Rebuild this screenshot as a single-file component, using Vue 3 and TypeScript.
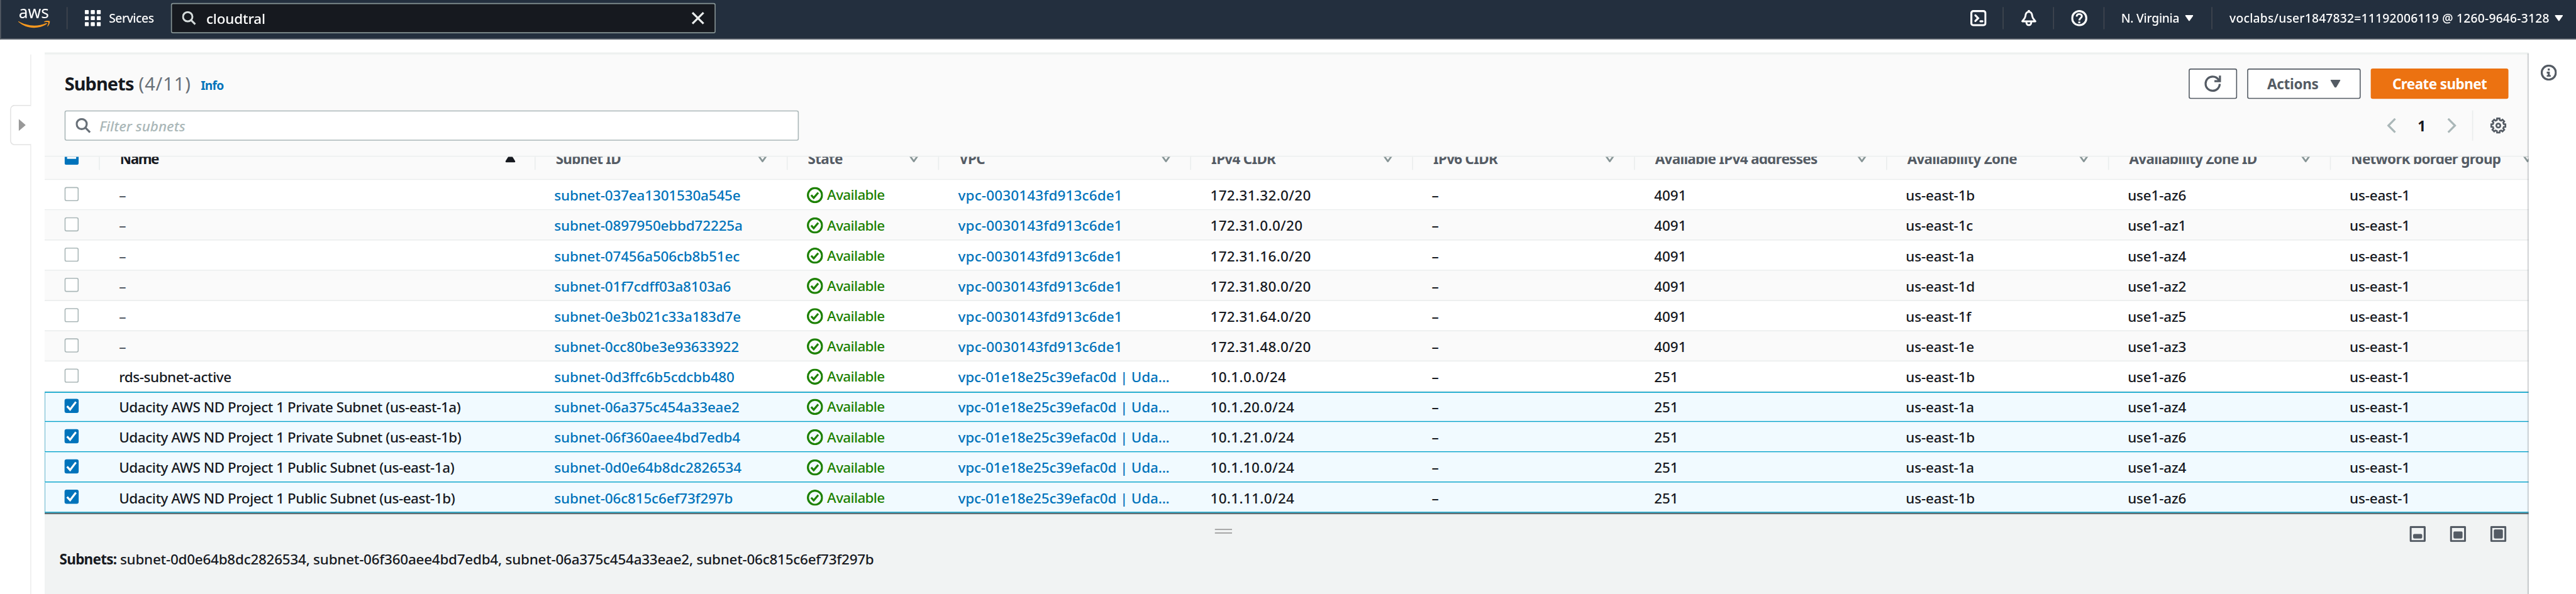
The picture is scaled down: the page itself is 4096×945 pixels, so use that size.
<script setup lang="ts">
interface Column {
  key: string
  label: string
  width: number
}

interface Subnet {
  name: string
  id: string
  vpc: string
  ipv4: string
  free: number
  zone: string
  zoneId: string
  selected: boolean
}

const columns: Column[] = [
  { key: 'name', label: 'Name', width: 864 },
  { key: 'id', label: 'Subnet ID', width: 500 },
  { key: 'state', label: 'State', width: 300 },
  { key: 'vpc', label: 'VPC', width: 500 },
  { key: 'ipv4', label: 'IPv4 CIDR', width: 440 },
  { key: 'ipv6', label: 'IPv6 CIDR', width: 440 },
  { key: 'free', label: 'Available IPv4 addresses', width: 500 },
  { key: 'zone', label: 'Availability Zone', width: 440 },
  { key: 'zoneId', label: 'Availability Zone ID', width: 440 },
  { key: 'border', label: 'Network border group', width: 440 },
]

const defaultVpc = 'vpc-0030143fd913c6de1'
const projectVpc = 'vpc-01e18e25c39efac0d | Uda...'
const project = 'Udacity AWS ND Project 1'

function row(name: string, id: string, vpc: string, ipv4: string, free: number, zone: string, az: number, selected = false): Subnet {
  return { name, id: 'subnet-' + id, vpc, ipv4, free, zone: 'us-east-1' + zone, zoneId: 'use1-az' + az, selected }
}

const subnets: Subnet[] = [
  row('–', '037ea1301530a545e', defaultVpc, '172.31.32.0/20', 4091, 'b', 6),
  row('–', '0897950ebbd72225a', defaultVpc, '172.31.0.0/20', 4091, 'c', 1),
  row('–', '07456a506cb8b51ec', defaultVpc, '172.31.16.0/20', 4091, 'a', 4),
  row('–', '01f7cdff03a8103a6', defaultVpc, '172.31.80.0/20', 4091, 'd', 2),
  row('–', '0e3b021c33a183d7e', defaultVpc, '172.31.64.0/20', 4091, 'f', 5),
  row('–', '0cc80be3e93633922', defaultVpc, '172.31.48.0/20', 4091, 'e', 3),
  row('rds-subnet-active', '0d3ffc6b5cdcbb480', projectVpc, '10.1.0.0/24', 251, 'b', 6),
  row(project + ' Private Subnet (us-east-1a)', '06a375c454a33eae2', projectVpc, '10.1.20.0/24', 251, 'a', 4, true),
  row(project + ' Private Subnet (us-east-1b)', '06f360aee4bd7edb4', projectVpc, '10.1.21.0/24', 251, 'b', 6, true),
  row(project + ' Public Subnet (us-east-1a)', '0d0e64b8dc2826534', projectVpc, '10.1.10.0/24', 251, 'a', 4, true),
  row(project + ' Public Subnet (us-east-1b)', '06c815c6ef73f297b', projectVpc, '10.1.11.0/24', 251, 'b', 6, true),
]

const chosen = 'subnet-0d0e64b8dc2826534, subnet-06f360aee4bd7edb4, subnet-06a375c454a33eae2, subnet-06c815c6ef73f297b'

const template = '110px ' + columns.map((c) => c.width + 'px').join(' ')

// Cog outline: eight teeth alternating between two radii.
const cog = Array.from({ length: 8 }, (_, i) => {
  const at = (deg: number, r: number) => {
    const a = ((i * 45 + deg) * Math.PI) / 180
    return (16 + r * Math.sin(a)).toFixed(2) + ',' + (16 - r * Math.cos(a)).toFixed(2)
  }
  return [at(-10, 14.3), at(10, 14.3), at(15, 11.2), at(30, 11.2)].join(' ')
}).join(' ')

// Top edge of the filled block in each split-panel size icon.
const panelSizes = [16, 11, 7]
</script>

<template>
  <div class="viewport">
    <div class="console">
      <header class="topbar">
        <svg class="logo" viewBox="0 0 64 42" width="64" height="42">
          <text x="1" y="22" textLength="60" lengthAdjust="spacingAndGlyphs">aws</text>
          <g transform="translate(0 27) scale(0.2086) translate(-1 -113)" fill="#f7981f">
            <path d="M273.5,143.7c-32.9,24.3-80.7,37.2-121.8,37.2c-57.6,0-109.5-21.3-148.7-56.7c-3.1-2.8-0.3-6.6,3.4-4.4c42.4,24.6,94.7,39.5,148.8,39.5c36.5,0,76.6-7.6,113.5-23.2C274.2,133.6,278.9,139.7,273.5,143.7z" />
            <path d="M287.2,128.1c-4.2-5.4-27.8-2.6-38.5-1.3c-3.2,0.4-3.7-2.4-0.8-4.5c18.8-13.2,49.7-9.4,53.3-5c3.6,4.5-1,35.4-18.6,50.2c-2.7,2.3-5.3,1.1-4.1-1.9C282.5,155.7,291.4,133.4,287.2,128.1z" />
          </g>
        </svg>
        <i class="rule rule-logo"></i>
        <svg class="grid-icon" viewBox="0 0 32 32" width="32" height="32" fill="#fff">
          <template v-for="r in 3" :key="r">
            <rect v-for="c in 3" :key="c" :x="(c - 1) * 12" :y="(r - 1) * 12" width="8" height="8" rx="1.5" />
          </template>
        </svg>
        <span class="services">Services</span>
        <div class="search">
          <svg viewBox="0 0 30 30" width="28" height="28" fill="none" stroke="#d5dbdb" stroke-width="4">
            <circle cx="12" cy="12" r="10" /><path d="M19 19l9 9" />
          </svg>
          <span>cloudtral</span>
          <svg class="clear" viewBox="0 0 26 26" width="26" height="26" stroke="#eaeded" stroke-width="4">
            <path d="M2 2l22 22M24 2L2 24" />
          </svg>
        </div>
        <div class="tools">
          <svg viewBox="0 0 32 32" width="32" height="32" fill="none" stroke="#fff" stroke-width="4">
            <rect x="2" y="2" width="28" height="28" rx="4" />
            <path d="M10 10.5l5.5 5.5-5.5 5.5M20 22.2h4" stroke-linecap="round" />
          </svg>
          <i class="rule"></i>
          <svg viewBox="0 0 32 32" width="32" height="32" fill="none" stroke="#fff" stroke-width="4">
            <path d="M16 0v3" stroke-linecap="round" />
            <path d="M16 3.500C10.500 3.500 9.600 8 9.300 11.500 8.900 16 6 18 3 22.300H29C26 18 23.100 16 22.700 11.500 22.400 8 21.500 3.500 16 3.500Z" stroke-width="3.600" stroke-linejoin="round" />
            <path d="M11.300 23v2.200a4.700 4.700 0 0 0 9.400 0V23" stroke-width="3.600" />
          </svg>
          <i class="rule"></i>
          <svg viewBox="0 0 32 32" width="32" height="32" fill="none" stroke="#fff">
            <circle cx="16" cy="16" r="14" stroke-width="4" />
            <path d="M10.800 12.800c.2-3.600 2.400-4.900 5.200-4.900s5.200 1.600 5.200 4.300c0 3.400-5.100 3.600-5.100 8.300" stroke-width="3.600" />
            <path d="M16 22.800v3.200" stroke-width="4" />
          </svg>
          <i class="rule"></i>
          <span class="region">N. Virginia</span>
          <svg class="caret" viewBox="0 0 16 12" width="16" height="12"><path d="M1 0h14q1.500 0 .7 1.500L9 11q-1 1.300-2 0L.3 1.500Q-.5 0 1 0z" fill="#fff" /></svg>
          <i class="rule rule-region"></i>
          <span class="account">voclabs/user1847832=11192006119 @ 1260-9646-3128</span>
          <svg class="caret" viewBox="0 0 16 12" width="16" height="12"><path d="M1 0h14q1.500 0 .7 1.500L9 11q-1 1.300-2 0L.3 1.500Q-.5 0 1 0z" fill="#fff" /></svg>
        </div>
      </header>

      <div class="body">
        <aside class="nav">
          <div class="nav-line nav-top"></div>
          <div class="nav-tab">
            <svg viewBox="0 0 14 24" width="14" height="24"><path d="M0 0l14 12L0 24z" fill="#999" /></svg>
          </div>
          <div class="nav-line nav-rest"></div>
        </aside>

        <main class="panel">
          <section class="toolbar">
            <div class="heading">
              <h1>Subnets</h1>
              <span class="count">(4/11)</span>
              <a class="info">Info</a>
              <div class="buttons">
                <button class="btn refresh">
                  <svg viewBox="0 0 34 34" width="34" height="34" fill="none" stroke="#545b64" stroke-width="4">
                    <path d="M30.500 17.500C30.500 25 24.500 31 16.500 31S2.500 25 2.500 17 8.500 3 16.500 3C22 3 27 6.500 29.500 11" />
                    <path d="M31 1v11H20" />
                  </svg>
                </button>
                <button class="btn actions">
                  <span>Actions</span>
                  <svg viewBox="0 0 20 16" width="20" height="16"><path d="M1.500 0h17q2 0 1 2l-7.500 12.500q-2 2.500-4 0L.5 2q-1-2 1-2z" fill="#545b64" /></svg>
                </button>
                <button class="btn create">Create subnet</button>
              </div>
            </div>
            <div class="filter-row">
              <div class="filter">
                <svg viewBox="0 0 30 30" width="30" height="30" fill="none" stroke="#687078" stroke-width="4">
                  <circle cx="12" cy="12" r="10" /><path d="M19 19l9.500 9.500" />
                </svg>
                <span>Filter subnets</span>
              </div>
              <div class="pager">
                <svg viewBox="0 0 18 30" width="18" height="30" fill="none" stroke="#aab7b8" stroke-width="4"><path d="M16.500 1.500L3 15l13.500 13.500" /></svg>
                <b>1</b>
                <svg viewBox="0 0 18 30" width="18" height="30" fill="none" stroke="#aab7b8" stroke-width="4"><path d="M1.500 1.500L15 15 1.500 28.500" /></svg>
                <i></i>
                <svg viewBox="0 0 32 32" width="32" height="32" fill="none" stroke="#545b64" stroke-width="3.400">
                  <polygon :points="cog" /><circle cx="16" cy="16" r="4" />
                </svg>
              </div>
            </div>
          </section>

          <div class="thead">
            <div class="thead-row" :style="{ gridTemplateColumns: template }">
              <div class="th th-check"><span class="box mixed"></span></div>
              <div v-for="c in columns" :key="c.key" class="th" :class="{ sorted: c.key === 'name' }">
                <span>{{ c.label }}</span>
                <svg v-if="c.key === 'name'" viewBox="0 0 20 20" width="20" height="20"><path d="M10 1l9.500 15.500q1 2.500-1.500 2.500H2q-2.500 0-1.500-2.500z" fill="#16191f" /></svg>
                <svg v-else viewBox="0 0 20 20" width="20" height="20" fill="none" stroke="#879596" stroke-width="3.500" stroke-linejoin="round"><path d="M2.500 6.500h15L10 17z" /></svg>
              </div>
            </div>
          </div>

          <div v-for="s in subnets" :key="s.id" class="row" :class="{ selected: s.selected }" :style="{ gridTemplateColumns: template }">
            <div class="td td-check">
              <span class="box" :class="{ checked: s.selected }">
                <svg v-if="s.selected" viewBox="0 0 28 28" width="28" height="28" fill="none" stroke="#fff" stroke-width="4"><path d="M5 14.500l6 6.500L22.500 6" /></svg>
              </span>
            </div>
            <div class="td name" :class="{ blank: s.name === '–' }">{{ s.name }}</div>
            <div class="td link">{{ s.id }}</div>
            <div class="td state">
              <svg viewBox="0 0 32 32" width="32" height="32" fill="none" stroke="#1d8102" stroke-width="4">
                <circle cx="16" cy="16" r="14" /><path d="M8.500 16l5 5.500 9-10.500" />
              </svg>
              <span>Available</span>
            </div>
            <div class="td link vpc" :class="{ named: s.vpc === projectVpc }">{{ s.vpc }}</div>
            <div class="td cidr">{{ s.ipv4 }}</div>
            <div class="td">–</div>
            <div class="td free">{{ s.free }}</div>
            <div class="td">{{ s.zone }}</div>
            <div class="td">{{ s.zoneId }}</div>
            <div class="td">us-east-1</div>
          </div>

          <section class="split">
            <div class="split-bar">
              <div class="grip"></div>
              <div class="sizes">
                <svg v-for="top in panelSizes" :key="top" viewBox="0 0 32 32" width="32" height="32">
                  <rect x="2" y="2" width="28" height="28" rx="1" fill="none" stroke="#545b64" stroke-width="4" />
                  <rect x="7" :y="top" width="18" :height="25 - top" rx="2.500" fill="#545b64" />
                </svg>
              </div>
            </div>
            <p class="chosen"><b>Subnets:</b> {{ chosen }}</p>
          </section>
        </main>

        <aside class="help">
          <svg viewBox="0 0 32 32" width="32" height="32">
            <circle cx="16" cy="16" r="14" fill="none" stroke="#545b64" stroke-width="4" />
            <path d="M14 8h4v4h-4zM12 14h6v7h2v3h-8v-3h2v-3h-2z" fill="#545b64" />
          </svg>
        </aside>
      </div>
    </div>
  </div>
</template>

<style>
body { background: #fff; }
</style>

<style scoped>
.viewport { width: 4096px; height: 945px; overflow: hidden; }
.console {
  width: 5108px;
  height: 1179px;
  transform: scale(0.80188, 0.8022);
  transform-origin: 0 0;
  display: flex;
  flex-direction: column;
  font-family: "Noto Sans", "Open Sans", sans-serif;
  font-size: 28px;
  color: #16191f;
  white-space: nowrap;
}
.console * { box-sizing: border-box; }
svg { display: block; flex: none; }

.topbar {
  flex: none;
  height: 78px;
  background: #232f3e;
  border-left: 2px solid #545b64;
  border-bottom: 2px solid #545b64;
  display: flex;
  align-items: flex-start;
  color: #fff;
  font-size: 24px;
  font-weight: 500;
}
.logo { margin: 14px 0 0 34px; fill: #fff; font-size: 35px; font-weight: 400; overflow: visible; }
.rule { flex: none; width: 2px; height: 44px; margin-top: 14px; background: #414750; }
.rule-logo { margin-left: 32px; }
.grid-icon { margin: 20px 0 0 34px; }
.services { width: 106px; margin: 12px 0 0 16px; line-height: 48px; letter-spacing: -0.55px; }
.search {
  width: 1080px;
  height: 60px;
  margin: 6px 0 0 17px;
  padding: 0 20px;
  border: 2px solid #879596;
  border-radius: 4px;
  background: #16191f;
  display: flex;
  align-items: center;
  font-size: 28px;
  letter-spacing: -0.2px;
}
.search span { flex: 1; margin-left: 20px; line-height: 56px; }
.tools { margin-left: auto; display: flex; }
.tools > svg { margin: 20px 32px 0 34px; }
.tools > svg:first-child { margin-left: 0; }
.region { margin: 12px 12px 0 33px; width: 115px; line-height: 48px; letter-spacing: -0.34px; }
.account { margin: 12px 12px 0 34px; width: 633px; line-height: 48px; letter-spacing: 0.28px; }
.tools > .caret { margin: 30px 36px 0 0; }
.tools > .caret:last-child { margin: 30px 26px 0 0; }

.body { flex: 1; display: flex; min-height: 0; }
.nav { flex: none; width: 88px; padding: 30px 26px 0 20px; display: flex; flex-direction: column; align-items: flex-end; }
.nav-line { width: 2px; background: #eeeeee; }
.nav-top { height: 100px; flex: none; }
.nav-rest { flex: 1; }
.nav-tab {
  flex: none;
  width: 42px;
  height: 80px;
  border: 2px solid #e3e3e3;
  border-right: 0;
  border-radius: 9px 0 0 9px;
  padding-left: 15px;
  display: flex;
  align-items: center;
}

.panel {
  flex: none;
  width: 4926px;
  margin-top: 26px;
  overflow: hidden;
  position: relative;
  display: flex;
  flex-direction: column;
}
.panel::after {
  content: "";
  position: absolute;
  inset: 2px 0 0 auto;
  width: 3px;
  background: linear-gradient(to right, rgba(84, 91, 100, 0.05), rgba(84, 91, 100, 0.4));
}
.toolbar {
  flex: none;
  height: 207px;
  border-top: 4px solid #eef1f0;
  border-bottom: 2px solid #eaeded;
  background: #fafafa;
  padding: 28px 40px 0;
}
.heading { height: 60px; display: flex; }
h1 { margin: 0; width: 147px; font-size: 36px; line-height: 60px; font-weight: 700; letter-spacing: -1.08px; }
.count { width: 123px; font-size: 36px; line-height: 60px; letter-spacing: 1.2px; color: #687078; }
.info { margin-top: 3px; font-size: 24px; line-height: 60px; font-weight: 700; letter-spacing: -1px; color: #0073bb; }
.buttons { margin-left: auto; display: flex; gap: 20px; }
.btn {
  height: 60px;
  padding: 0;
  border: 2px solid #545b64;
  border-radius: 4px;
  background: #fff;
  color: #545b64;
  font: 700 28px/52px "Noto Sans", "Open Sans", sans-serif;
  display: flex;
  align-items: center;
  justify-content: center;
}
.refresh { width: 96px; }
.actions { width: 225px; gap: 24px; letter-spacing: -0.34px; }
.create { width: 273px; border-color: #ec7211; background: #ec7211; color: #fff; letter-spacing: -0.7px; }
.btn span { line-height: 54px; }
.filter-row { margin-top: 23px; height: 60px; display: flex; justify-content: space-between; }
.filter {
  width: 1456px;
  height: 60px;
  padding-left: 20px;
  border: 2px solid #aab7b8;
  border-radius: 4px;
  background: #fff;
  display: flex;
  align-items: center;
}
.filter span { margin-left: 17px; font-style: italic; font-weight: 500; line-height: 56px; color: #aab7b8; }
.pager { display: flex; align-items: center; padding-right: 4px; }
.pager b { width: 102px; text-align: center; line-height: 58px; }
.pager i { width: 2px; height: 60px; margin: 0 34px 0 31px; background: #eaeded; }

.thead { flex: none; height: 46px; overflow: hidden; background: #fafafa; border-bottom: 2px solid #eaeded; }
.thead-row { display: grid; height: 46px; margin-top: -23px; }
.th {
  display: flex;
  align-items: center;
  justify-content: space-between;
  padding: 0 38px 0 40px;
  border-right: 2px solid #eaeded;
  color: #545b64;
  font-weight: 700;
  letter-spacing: -0.9px;
}
.th > span:not(.box) { padding-top: 3px; line-height: 46px; }
.th.sorted { color: #16191f; letter-spacing: -1.8px; }

.row {
  flex: none;
  display: grid;
  height: 60px;
  border-bottom: 2px solid #eaeded;
  background: #fff;
  font-weight: 500;
}
.row:nth-child(even) { background: #fafafa; }
.row:nth-child(odd) { background: #fff; }
.row.selected {
  height: 60px;
  background: #f1faff;
  border-bottom-color: #00a1c9;
  box-shadow: inset 1.5px 0 #3b9fbd;
}
.row:not(.selected) + .selected { border-top: 2px solid #00a1c9; }
.row:not(.selected) + .selected > .td { margin-top: -2px; }
.td { padding-left: 37px; height: 58px; line-height: 60px; letter-spacing: -0.2px; }
.name { padding-left: 38px; letter-spacing: -0.56px; }
.blank { color: #545b64; }
.link { color: #0073bb; }
.vpc { padding-left: 38px; letter-spacing: 0.2px; }
.vpc.named { letter-spacing: -0.2px; }
.cidr { padding-left: 38px; letter-spacing: 0.42px; }
.free { padding-left: 38px; letter-spacing: 0; }
.state { display: flex; align-items: center; padding-left: 38px; color: #1d8102; letter-spacing: -0.8px; }
.state svg { margin-top: 2px; }
.state span { margin-left: 8px; }
.th-check, .td-check { padding: 0 0 0 40px; display: flex; align-items: center; justify-content: flex-start; }
.td-check .box { margin-top: -2px; }
.box { flex: none; width: 28px; height: 28px; border: 2px solid #aab7b8; border-radius: 4px; background: #fff; }
.box.checked { border: 0; background: #0073bb; }
.box.mixed { border: 0; background: linear-gradient(#fff, #fff) 5px 12px / 18px 4px no-repeat #0073bb; }

.split { flex: 1; border-top: 2px solid #3b4850; background: #f1f3f3; box-shadow: inset 0 2px 1px rgba(0, 28, 36, 0.12); }
.split-bar { display: grid; grid-template-columns: 2321px 34px 1fr; padding: 24px 44px 0 0; }
.grip { grid-column: 2; height: 9px; margin-top: 6px; border-top: 2px solid #959595; border-bottom: 2px solid #959595; }
.sizes { grid-column: 3; display: flex; gap: 48px; justify-content: flex-end; }
.chosen { margin: 4px 0 0 30px; line-height: 58px; font-weight: 500; letter-spacing: -0.3px; }
.chosen b { letter-spacing: -0.9px; }

.help { padding: 50px 0 0 24px; }
</style>
